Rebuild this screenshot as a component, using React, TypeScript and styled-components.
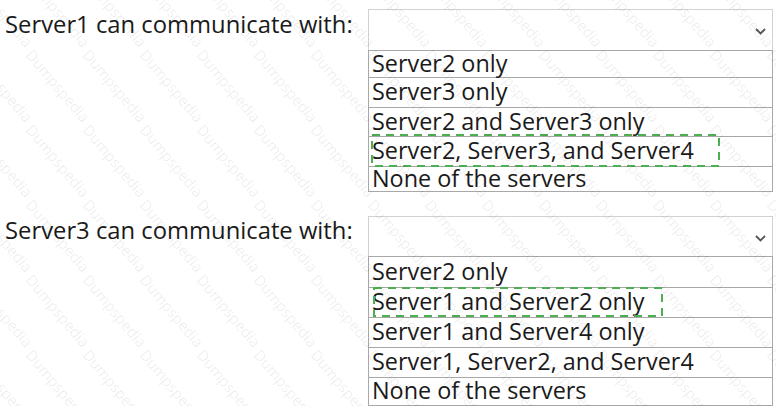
import React from "react";
import styled, { createGlobalStyle } from "styled-components";

const Global = createGlobalStyle`
  html, body { margin: 0; padding: 0; background: #ffffff; }
  body { font-family: "Open Sans", "Noto Sans", sans-serif; color: #1a1a1a; }
`;

const Page = styled.div`
  position: relative;
  width: 776px;
  height: 406px;
  overflow: hidden;
  padding-top: 9px;
  box-sizing: border-box;
  display: flex;
  flex-direction: column;
  gap: 24px;
`;

const Block = styled.div`
  display: flex;
  align-items: flex-start;
`;

const Label = styled.div<{ $top: number }>`
  width: 368px;
  box-sizing: border-box;
  padding-left: 5px;
  padding-top: ${(p) => p.$top}px;
  font-size: 23.8px;
  line-height: 26px;
  white-space: nowrap;
`;

const Dropdown = styled.div`
  width: 405px;
  display: flex;
  flex-direction: column;
`;

const Select = styled.div<{ $h: number }>`
  height: ${(p) => p.$h}px;
  box-sizing: border-box;
  border: 1px solid #d2d2d2;
  border-bottom: none;
  display: flex;
  align-items: center;
  justify-content: flex-end;
  padding-right: 6px;
`;

const Chevron = styled.svg<{ $mt: number }>`
  width: 11px;
  height: 7px;
  margin-top: ${(p) => p.$mt}px;
`;

const List = styled.div`
  border: 1px solid #a8a8a8;
  border-bottom: none;
  display: flex;
  flex-direction: column;
`;

const Row = styled.div<{ $h: number }>`
  height: ${(p) => p.$h}px;
  box-sizing: border-box;
  border-bottom: 1px solid #a8a8a8;
  padding: 0 0 3px 3px;
  display: flex;
  align-items: center;
  font-size: 23.4px;
  line-height: 22px;
  white-space: nowrap;
`;

const Pick = styled.span`
  position: relative;
  display: inline-block;
`;

const Dash = styled.svg`
  position: absolute;
  pointer-events: none;
  overflow: visible;
`;

const Watermark = styled.div`
  position: absolute;
  inset: 0;
  pointer-events: none;
  overflow: hidden;
`;

const Mark = styled.span`
  position: absolute;
  font-family: "Open Sans", sans-serif;
  font-size: 15px;
  color: rgba(0, 0, 0, 0.08);
  transform: rotate(50deg);
  transform-origin: 0 0;
  white-space: nowrap;
`;

type Opt = { text: string; h: number; pick?: { x: number; y: number; w: number; hh: number } };

const blocks: { label: string; labelTop: number; selH: number; chev: number; opts: Opt[] }[] = [
  {
    label: "Server1 can communicate with:",
    labelTop: 2,
    selH: 41,
    chev: 2,
    opts: [
      { text: "Server2 only", h: 27 },
      { text: "Server3 only", h: 30 },
      { text: "Server2 and Server3 only", h: 29 },
      { text: "Server2, Server3, and Server4", h: 30, pick: { x: -1, y: -5, w: 349, hh: 33 } },
      { text: "None of the servers", h: 25 },
    ],
  },
  {
    label: "Server3 can communicate with:",
    labelTop: 1,
    selH: 40,
    chev: 4,
    opts: [
      { text: "Server2 only", h: 31 },
      { text: "Server1 and Server2 only", h: 30, pick: { x: 1, y: -3, w: 290, hh: 30 } },
      { text: "Server1 and Server4 only", h: 30 },
      { text: "Server1, Server2, and Server4", h: 30 },
      { text: "None of the servers", h: 28 },
    ],
  },
];

export default function App() {
  const marks: React.ReactNode[] = [];
  for (let r = 0; r < 6; r++) {
    for (let c = 0; c < 15; c++) {
      marks.push(
        <Mark key={`${r}-${c}`} style={{ left: c * 57 - 20, top: r * 75 - 30 }}>
          Dumpspedia
        </Mark>
      );
    }
  }
  return (
    <>
      <Global />
      <Page>
        {blocks.map((b, i) => (
          <Block key={i}>
            <Label $top={b.labelTop}>{b.label}</Label>
            <Dropdown>
              <Select $h={b.selH}>
                <Chevron $mt={b.chev} viewBox="0 0 11 7">
                  <polyline points="1,1 5.5,5.5 10,1" fill="none" stroke="#555" strokeWidth="1.8" />
                </Chevron>
              </Select>
              <List>
                {b.opts.map((o, j) => (
                  <Row key={j} $h={o.h}>
                    {o.pick ? (
                      <Pick>
                        {o.text}
                        <Dash
                          style={{ left: o.pick.x, top: o.pick.y }}
                          width={o.pick.w}
                          height={o.pick.hh}
                        >
                          <rect
                            x="1"
                            y="1"
                            width={o.pick.w - 2}
                            height={o.pick.hh - 2}
                            fill="none"
                            stroke="#4caf50"
                            strokeWidth="2"
                            strokeDasharray="8 6"
                          />
                        </Dash>
                      </Pick>
                    ) : (
                      o.text
                    )}
                  </Row>
                ))}
              </List>
            </Dropdown>
          </Block>
        ))}
        <Watermark>{marks}</Watermark>
      </Page>
    </>
  );
}
